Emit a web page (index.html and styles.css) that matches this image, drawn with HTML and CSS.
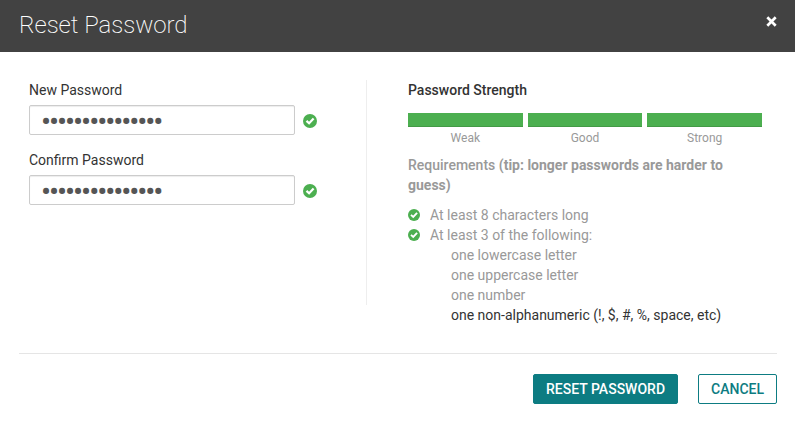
FILE: index.html
```html
<!DOCTYPE html>
<html lang="en">
<head>
<meta charset="utf-8">
<title>Reset Password</title>
<link rel="stylesheet" href="styles.css">
</head>
<body>
<svg class="defs" width="0" height="0"><symbol id="check" viewBox="0 0 14 14"><circle cx="7" cy="7" r="7" fill="#4caf50"/><path d="M3.5 6.9 6.1 9.3 10.6 4.5" fill="none" stroke="#fff" stroke-width="2.2"/></symbol></svg>
<header class="header">
  <h1 class="title">Reset Password</h1>
  <button class="close" aria-label="Close"><svg width="11" height="11" viewBox="0 0 11 11"><path d="M1.3 1.3 9.7 9.7M9.7 1.3 1.3 9.7" stroke="#fff" stroke-width="2.7"/></svg></button>
</header>
<main class="content">
  <form class="form">
    <label class="label" for="new">New Password</label>
    <div class="field"><input class="input" id="new" type="password" value="abcdefghijklmno"><svg class="check"><use href="#check"/></svg></div>
    <label class="label" for="confirm">Confirm Password</label>
    <div class="field"><input class="input" id="confirm" type="password" value="abcdefghijklmno"><svg class="check"><use href="#check"/></svg></div>
  </form>
  <section class="strength">
    <h2 class="heading">Password Strength</h2>
    <div class="meter">
      <div class="level"><div class="bar"></div>Weak</div>
      <div class="level"><div class="bar"></div>Good</div>
      <div class="level"><div class="bar"></div>Strong</div>
    </div>
    <p class="requirements">Requirements <b>(tip: longer passwords are harder to guess)</b></p>
    <ul class="list">
      <li class="item"><svg class="check small"><use href="#check"/></svg>At least 8 characters long</li>
      <li class="item"><svg class="check small"><use href="#check"/></svg>At least 3 of the following:</li>
      <li class="sub">one lowercase letter</li>
      <li class="sub">one uppercase letter</li>
      <li class="sub">one number</li>
      <li class="sub pending">one non-alphanumeric (!, $, #, %, space, etc)</li>
    </ul>
  </section>
</main>
<footer class="footer">
  <button class="button primary">RESET PASSWORD</button>
  <button class="button">CANCEL</button>
</footer>
</body>
</html>
```
FILE: styles.css
```css
* { box-sizing: border-box; }
body { margin: 0; background: #fff; color: #333; font: 14px/20px Roboto, sans-serif; }
.defs { display: block; }
.header { display: flex; justify-content: space-between; height: 52px; padding: 0 18px 0 19px; background: #424242; }
.title { margin: 9px 0 0; font-size: 24px; line-height: 32px; font-weight: 200; letter-spacing: -.05px; color: #fff; }
.close { width: 11px; height: 11px; margin-top: 16px; padding: 0; border: 0; background: none; }
.close svg { display: block; }
.content { display: flex; height: 301px; padding: 28px 0 0 29px; }
.form { width: 338px; height: 225px; border-right: 1px solid #eee; }
.label { display: block; height: 25px; }
.field { display: flex; align-items: center; gap: 8px; margin-bottom: 15px; }
.input { width: 266px; height: 30px; padding: 2px 11px 0; border: 1px solid #ccc; border-radius: 2px; box-shadow: inset 0 1px 1px rgba(0,0,0,.075); background: #fff; color: #555; font: 30px/26px Roboto, sans-serif; letter-spacing: -2.1px; outline: 0; }
.check { display: block; width: 14px; height: 14px; margin-top: 2px; }
.strength { width: 354px; margin-left: 41px; color: #999; }
.heading { margin: 0 0 13px; font-size: 14px; line-height: 20px; font-weight: 500; color: #333; }
.meter { display: flex; gap: 5px; font-size: 12px; line-height: 20px; text-align: center; }
.level { flex: 1; }
.bar { height: 14px; margin-bottom: 1px; background: #4caf50; border-bottom: 1px solid #439a46; }
.requirements { margin: 7px 0 10px; font-weight: 500; }
.list { margin: 0; padding: 0; list-style: none; }
.item { display: flex; align-items: center; gap: 10px; }
.small { width: 12px; height: 12px; margin-top: 0; }
.sub { padding-left: 43px; }
.pending { color: #333; }
.footer { display: flex; justify-content: flex-end; gap: 20px; margin: 0 18px 0 19px; padding-top: 20px; border-top: 1px solid #e5e5e5; }
.button { height: 30px; padding: 0 12px; border: 1px solid #0d7c82; border-radius: 2px; background: #fff; color: #0d7c82; font: 500 14px Roboto, sans-serif; }
.primary { background: #0d7c82; color: #fff; }
```
